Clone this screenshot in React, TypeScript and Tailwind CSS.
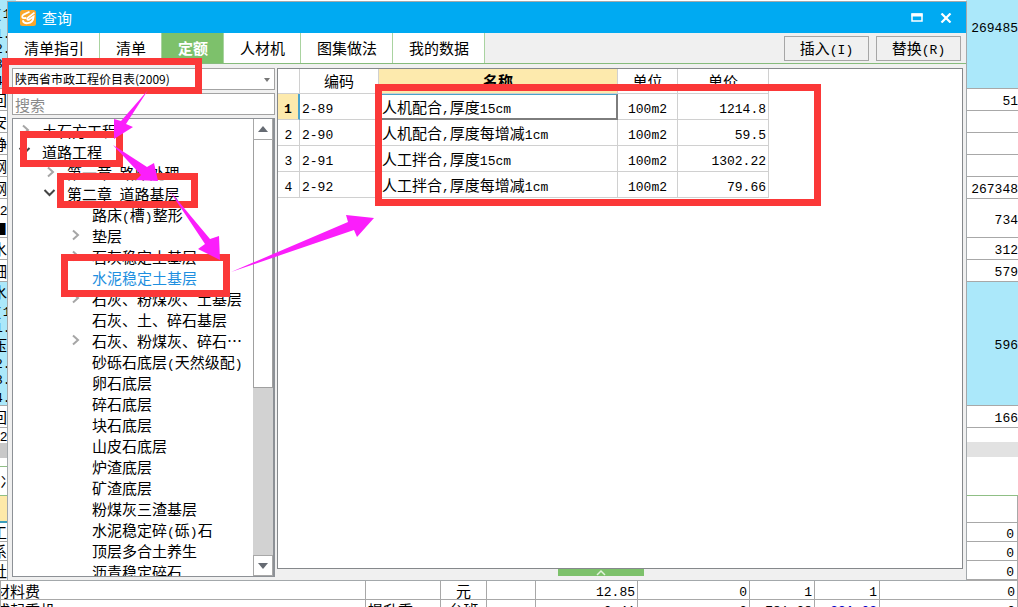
import React, { useState } from "react";

interface TreeNode {
  label: string;
  level: number;
  state?: "open" | "closed";
}

interface SideRow {
  text?: string;
  className: string;
}

const TABS = ["清单指引", "清单", "定额", "人材机", "图集做法", "我的数据"];

const TREE: TreeNode[] = [
  { label: "土石方工程", level: 0, state: "closed" },
  { label: "道路工程", level: 0, state: "open" },
  { label: "第一章\u2002路床处理", level: 1, state: "closed" },
  { label: "第二章\u2002道路基层", level: 1, state: "open" },
  { label: "路床(槽)整形", level: 2 },
  { label: "垫层", level: 2, state: "closed" },
  { label: "石灰稳定土基层", level: 2, state: "closed" },
  { label: "水泥稳定土基层", level: 2 },
  { label: "石灰、粉煤灰、土基层", level: 2, state: "closed" },
  { label: "石灰、土、碎石基层", level: 2 },
  { label: "石灰、粉煤灰、碎石⋯", level: 2, state: "closed" },
  { label: "砂砾石底层(天然级配)", level: 2 },
  { label: "卵石底层", level: 2 },
  { label: "碎石底层", level: 2 },
  { label: "块石底层", level: 2 },
  { label: "山皮石底层", level: 2 },
  { label: "炉渣底层", level: 2 },
  { label: "矿渣底层", level: 2 },
  { label: "粉煤灰三渣基层", level: 2 },
  { label: "水泥稳定碎(砾)石", level: 2 },
  { label: "顶层多合土养生", level: 2 },
  { label: "沥青稳定碎石", level: 2 },
];

const ROWS = [
  { code: "2-89", name: "人机配合,厚度15cm", unit: "100m2", price: "1214.8" },
  { code: "2-90", name: "人机配合,厚度每增减1cm", unit: "100m2", price: "59.5" },
  { code: "2-91", name: "人工拌合,厚度15cm", unit: "100m2", price: "1302.22" },
  { code: "2-92", name: "人工拌合,厚度每增减1cm", unit: "100m2", price: "79.66" },
];

const LEFT_ROWS: SideRow[] = [
  { text: "(1", className: "h-[25px] bg-[#abe8fa] -indent-[5px]" },
  { text: "1.", className: "h-[15px] bg-[#abe8fa] -indent-[5px]" },
  { text: "2.", className: "h-[15px] bg-[#abe8fa] -indent-[5px]" },
  { text: "3.", className: "h-[15px] bg-[#abe8fa] -indent-[5px]" },
  { text: "4.", className: "h-[19px] bg-[#abe8fa] -indent-[5px] border-b" },
  { text: "回", className: "h-[22px] -indent-2 border-b" },
  { text: "安", className: "h-[22px] -indent-2 border-b" },
  { text: "静", className: "h-[22px] -indent-2 border-b" },
  { text: "钢", className: "h-[22px] -indent-2 border-b" },
  { text: "钢", className: "h-[22px] -indent-2 border-b" },
  { text: "C2", className: "h-[21px] -indent-2" },
  { text: "■", className: "h-[18px] -indent-2 border-b" },
  { text: "水", className: "h-[22px] -indent-2 border-b" },
  { text: "细", className: "h-[22px] -indent-2 border-b" },
  { text: "水", className: "h-[20px] bg-[#abe8fa] -indent-2" },
  { text: "(1", className: "h-[17px] bg-[#abe8fa] -indent-[5px]" },
  { text: "1.", className: "h-[15px] bg-[#abe8fa] -indent-[5px]" },
  { text: "压", className: "h-[21px] bg-[#abe8fa] -indent-2" },
  { text: "2.", className: "h-[15px] bg-[#abe8fa] -indent-[5px]" },
  { text: "3.", className: "h-[17px] bg-[#abe8fa] -indent-[5px]" },
  { text: "4.", className: "h-[19px] bg-[#abe8fa] -indent-[5px] border-b" },
  { text: "回", className: "h-[22px] -indent-2 border-b" },
  { text: "C2", className: "h-[15px] -indent-2" },
  { className: "h-[15px] bg-[#c8c8c8]" },
  { className: "h-[9px] border-b-[#8fbf85] border-b" },
  { text: "冫", className: "h-[29px] border-b-[#8fbf85] border-b" },
  { className: "h-[27px] bg-[#fde9a9] border-b-2 border-b-[#3c9dbb]" },
  { text: "工", className: "h-[19px] -indent-2 border-b" },
  { text: "系", className: "h-[19px] -indent-2 border-b" },
  { text: "社", className: "h-[19px] -indent-2" },
];

const RIGHT_ROWS: SideRow[] = [
  { text: "269485", className: "h-[89px] bg-[#abe8fa] pb-9 border-b" },
  { text: "51", className: "h-[22px] border-b" },
  { className: "h-[22px] border-b" },
  { className: "h-[22px] border-b" },
  { className: "h-[22px] border-b" },
  { text: "267348", className: "h-[22px] border-b" },
  { text: "734", className: "h-[39px] border-b" },
  { text: "312", className: "h-[22px] border-b" },
  { text: "579", className: "h-[22px] border-b" },
  { text: "596", className: "h-[124px] bg-[#abe8fa] border-b" },
  { text: "166", className: "h-[22px] border-b" },
  { className: "h-[14px]" },
  { className: "h-[15px] bg-[#e2e2e2]" },
  { className: "h-[39px] border-b border-b-[#8fbf85]" },
  { className: "h-[27px] border-b border-r" },
  { text: "0", className: "h-[19px] pr-[3px] border-b border-r" },
  { text: "0", className: "h-[19px] pr-[3px] border-b border-r" },
  { text: "0", className: "h-[19px] pr-[3px] border-b border-r" },
];

const MARKS = [
  { x: 2, y: 58, w: 200, h: 36 },
  { x: 20, y: 131, w: 103, h: 36 },
  { x: 57, y: 173, w: 141, h: 35 },
  { x: 61, y: 254, w: 169, h: 43 },
  { x: 375, y: 84, w: 446, h: 122 },
];

const ARROWS = [
  "148,90 121,121 114,119 114,139 133,127 126,124",
  "113,145 147,167 154,163 158,181 136,180 141,175",
  "169,190 210,239 219,236 220,260 198,249 205,244",
  "231,272 348,222 346,215 374,218 357,237 354,230",
];

// latin runs are set in a narrower mono face, half as wide as a hanzi
const Mixed = ({ text }: { text: string }) => (
  <>
    {text.split(/([\x21-\x7e]+)/).map((part, i) =>
      i % 2 === 1 ? (
        <span
          key={i}
          className="font-['Liberation_Mono','Noto_Sans_CJK_SC',monospace] text-[13px] leading-none"
        >
          {part}
        </span>
      ) : (
        part
      )
    )}
  </>
);

const Chevron = ({ state }: { state?: "open" | "closed" }) => (
  <svg width="15" height="15" viewBox="0 0 15 15" fill="none" className="shrink-0">
    {state === "closed" && (
      <path d="M5 2.5L10 7L5 11.5" stroke="#a6a6a6" strokeWidth="2" />
    )}
    {state === "open" && (
      <path d="M1.5 4L6.5 9L11.5 4" stroke="#444" strokeWidth="2" />
    )}
  </svg>
);

const TitleBar = () => (
  <header className="flex h-[31px] shrink-0 items-center bg-[#00aaf2] pl-3 pr-[14px] text-white">
    <svg width="16" height="16" viewBox="0 0 16 16" className="mr-1.5">
      <rect width="16" height="16" rx="2.5" fill="#f9a72b" />
      <path
        d="M9.5 1.8L3.6 4.6C1.6 6 1.8 8 3.8 8.2L6.4 8"
        fill="none"
        stroke="#fff"
        strokeWidth="1.8"
      />
      <path
        d="M14.5 2.6L8 7.6C6.6 9 7.4 10.6 9.2 9.6L13.6 6.6C13.4 10 11.2 12.8 7.6 13.2C5 13.4 3.2 12.2 2.8 10.2"
        fill="none"
        stroke="#fff"
        strokeWidth="1.8"
      />
    </svg>
    <h1 className="flex-1 text-[15px]">查询</h1>
    <button type="button" aria-label="最大化" className="mr-[17px]">
      <svg width="12" height="10" viewBox="0 0 12 10">
        <path d="M1 1H11V8H1Z" fill="none" stroke="#fff" strokeWidth="1.5" />
        <path d="M0.5 0.5H11.5V3.5H0.5Z" fill="#fff" />
      </svg>
    </button>
    <button type="button" aria-label="关闭">
      <svg width="12" height="10" viewBox="0 0 12 10">
        <path d="M1.5 0.5L10.5 9.5M10.5 0.5L1.5 9.5" stroke="#fff" strokeWidth="2.2" />
      </svg>
    </button>
  </header>
);

const SideColumn = ({ rows, align }: { rows: SideRow[]; align: string }) => (
  <div className={`flex flex-col overflow-hidden ${align}`}>
    {rows.map((row, i) => (
      <div
        key={i}
        className={`flex shrink-0 items-center whitespace-nowrap border-[#a8a8a8] leading-4 ${row.className}`}
      >
        <span>
          <Mixed text={row.text ?? ""} />
        </span>
      </div>
    ))}
  </div>
);

const CostTable = () => {
  const cell = "overflow-hidden whitespace-nowrap border border-[#a8a8a8] p-0 px-[2px]";
  const rows = [
    ["材料费", "", "元", "", "12.85", "0", "1", "1", "0"],
    ["式起重机", "提升重", "台班", "", "0.41", "0", "781.08", "881.08", "0"],
  ];

  return (
    <table className="w-full table-fixed border-collapse bg-white leading-[17px]">
      <colgroup>
        <col className="w-[365px]" />
        <col className="w-[75px]" />
        <col className="w-[46px]" />
        <col className="w-[49px]" />
        <col className="w-[102px]" />
        <col className="w-[112px]" />
        <col className="w-[65px]" />
        <col className="w-[65px]" />
        <col />
      </colgroup>
      <tbody>
        {rows.map((row, r) => (
          <tr key={r} className="h-[18px]">
            {row.map((text, c) => (
              <td
                key={c}
                className={`${cell} ${c === 0 ? "-indent-[8px]" : ""} ${
                  c === 2 ? "text-center" : c > 3 ? "text-right" : ""
                } ${r === 1 && c === 7 ? "font-bold text-[#0000c8]" : ""}`}
              >
                <Mixed text={text} />
              </td>
            ))}
          </tr>
        ))}
      </tbody>
    </table>
  );
};

const QuotaTree = () => {
  const [selected, setSelected] = useState<string>("水泥稳定土基层");

  return (
    <div className="flex min-h-0 flex-1 border border-r-2 border-[#8d9196] bg-white">
      <ul className="min-w-0 flex-1 overflow-hidden pt-px">
        {TREE.map((node) => (
          <li key={node.label}>
            <button
              type="button"
              onClick={() => setSelected(node.label)}
              className={`flex h-[21px] w-full items-center gap-[9px] whitespace-nowrap ${
                node.level === 0 ? "pl-[5px]" : node.level === 1 ? "pl-[30px]" : "pl-[55px]"
              } ${selected === node.label ? "text-[#1e8fe0]" : ""}`}
            >
              <Chevron state={node.state} />
              <span>
                <Mixed text={node.label} />
              </span>
            </button>
          </li>
        ))}
      </ul>
      <div className="flex w-5 flex-col bg-[#d2d2d2]">
        <button
          type="button"
          aria-label="向上滚动"
          className="flex h-[21px] items-center justify-center border border-t-0 border-[#a8a8a8] bg-white"
        >
          <svg width="10" height="6" viewBox="0 0 10 6">
            <path d="M5 0L10 6H0Z" fill="#666b73" />
          </svg>
        </button>
        <div className="h-[248px] border border-t-0 border-[#a0a0a0] bg-white" />
        <div className="flex-1" />
        <button
          type="button"
          aria-label="向下滚动"
          className="flex h-[21px] items-center justify-center border border-[#a8a8a8] bg-white"
        >
          <svg width="10" height="6" viewBox="0 0 10 6">
            <path d="M0 0H10L5 6Z" fill="#666b73" />
          </svg>
        </button>
      </div>
    </div>
  );
};

const ResultTable = () => {
  const head = "border-b border-r border-[#d0d0d0] p-0 font-normal";
  const cell = "border-b border-r border-[#d0d0d0] p-0";

  return (
    <table className="w-[491px] table-fixed border-separate border-spacing-0">
      <colgroup>
        <col className="w-[22px]" />
        <col className="w-[79px]" />
        <col className="w-[239px]" />
        <col className="w-[60px]" />
        <col className="w-[91px]" />
      </colgroup>
      <thead>
        <tr className="h-[25px]">
          <th className={head} />
          <th className={head}>编码</th>
          <th className="border-b border-r border-[#d0d0d0] bg-[#fdeaad] p-0 font-bold">名称</th>
          <th className={head}>单位</th>
          <th className={head}>单价</th>
        </tr>
      </thead>
      <tbody>
        {ROWS.map((row, i) => (
          <tr key={row.code} className="h-[26px]">
            <td
              className={
                i === 0
                  ? "border-b border-r-2 border-b-[#d0d0d0] border-r-[#4aa3cc] bg-[#fdeaad] p-0 text-center font-bold"
                  : `${cell} text-center`
              }
            >
              <Mixed text={String(i + 1)} />
            </td>
            <td className={`${cell} pl-[2px]`}>
              <Mixed text={row.code} />
            </td>
            <td
              className={
                i === 0
                  ? "border-b-2 border-r-2 border-t border-[#7d7d7d] border-t-[#4aa3cc] p-0 pl-[3px]"
                  : `${cell} pl-[3px]`
              }
            >
              <Mixed text={row.name} />
            </td>
            <td className={`${cell} text-center`}>
              <Mixed text={row.unit} />
            </td>
            <td className={`${cell} pr-[2px] text-right`}>
              <Mixed text={row.price} />
            </td>
          </tr>
        ))}
      </tbody>
    </table>
  );
};

const QueryDialog = () => {
  const [tab, setTab] = useState<string>("定额");

  return (
    <section className="absolute bottom-[26px] left-[7px] right-[51px] top-px flex flex-col border border-[#a3a8ab] bg-[#f0f0f0]">
      <TitleBar />
      <nav className="flex h-[31px] shrink-0 items-stretch border-b border-[#86bb7c]">
        {TABS.map((name) => (
          <button
            key={name}
            type="button"
            onClick={() => setTab(name)}
            className={`border-r border-[#a9d3a0] pl-4 pr-[15px] ${
              tab === name ? "bg-[#7dc16b] font-bold text-white" : "bg-white"
            }`}
          >
            {name}
          </button>
        ))}
        <div className="ml-auto flex items-center gap-[7px] pr-[5px]">
          <button type="button" className="h-[25px] w-[85px] border border-[#a6a6a6]">
            <Mixed text="插入(I)" />
          </button>
          <button type="button" className="h-[25px] w-[85px] border border-[#a6a6a6]">
            <Mixed text="替换(R)" />
          </button>
        </div>
      </nav>
      <div className="flex min-h-0 flex-1 gap-[2px] pl-1 pr-[3px] pt-1">
        <div className="flex w-[263px] shrink-0 flex-col gap-[3px] pb-[3px]">
          <div className="relative">
            <select
              aria-label="定额库"
              className="block h-[22px] w-full appearance-none border border-[#a3a3a3] bg-white pl-[2px] text-[12px]"
            >
              <option>陕西省市政工程价目表(2009)</option>
            </select>
            <svg
              width="6"
              height="4"
              viewBox="0 0 6 4"
              className="pointer-events-none absolute right-[5px] top-[10px]"
            >
              <path d="M0 0H6L3 4Z" fill="#777" />
            </svg>
          </div>
          <input
            type="text"
            aria-label="搜索"
            placeholder="搜索"
            className="h-[22px] w-full border border-[#a3a3a3] bg-white pl-[2px] placeholder:text-[#8a8a8a]"
          />
          <QuotaTree />
        </div>
        <div className="flex min-w-0 flex-1 flex-col">
          <div className="min-h-0 flex-1 overflow-hidden border border-[#85888b] bg-white">
            <ResultTable />
          </div>
          <div className="h-[11px] shrink-0">
            <button
              type="button"
              aria-label="展开"
              className="ml-[41%] flex h-[7px] w-[86px] items-center justify-center bg-[#7dc16b]"
            >
              <svg width="10" height="7" viewBox="0 0 10 7" fill="none">
                <path d="M1 6L5 2L9 6" stroke="#e2f3dd" strokeWidth="1.5" />
              </svg>
            </button>
          </div>
        </div>
      </div>
    </section>
  );
};

const Annotations = () => (
  <svg className="pointer-events-none absolute inset-0 h-full w-full">
    {MARKS.map((m) => (
      <rect
        key={`${m.x}-${m.y}`}
        x={m.x + 3.5}
        y={m.y + 3.5}
        width={m.w - 7}
        height={m.h - 7}
        fill="none"
        stroke="#fb3838"
        strokeWidth="7"
      />
    ))}
    {ARROWS.map((points) => (
      <polygon key={points} points={points} fill="#fb1efb" />
    ))}
  </svg>
);

const App = () => {
  return (
    <main className="relative flex h-screen w-full flex-col overflow-hidden bg-white font-['Noto_Sans_CJK_SC',sans-serif] text-[15px] leading-5 text-black">
      <div className="flex min-h-0 flex-1 justify-between overflow-hidden">
        <SideColumn rows={LEFT_ROWS} align="w-[16px]" />
        <SideColumn rows={RIGHT_ROWS} align="w-[52px] text-right [&>div]:justify-end" />
      </div>
      <div className="h-[27px] shrink-0 overflow-hidden">
        <CostTable />
      </div>
      <QueryDialog />
      <Annotations />
    </main>
  );
};

export default App;
